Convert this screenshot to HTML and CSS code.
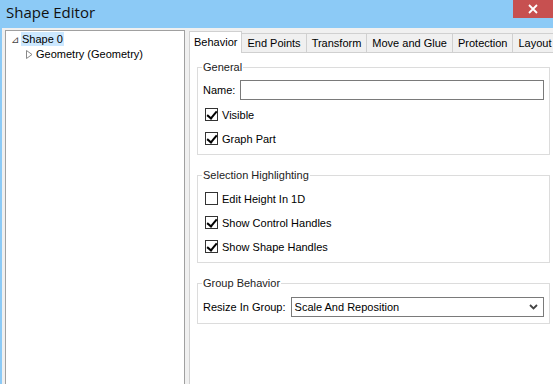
FILE: index.html
```html
<!DOCTYPE html>
<html>
<head>
<meta charset="utf-8">
<link rel="stylesheet" href="styles.css">
</head>
<body>
<div class="titlebar">
  <span class="title">Shape Editor</span>
  <div class="close"><svg width="10" height="10" viewBox="0 0 10 10"><path d="M1 1 L9 9 M9 1 L1 9" stroke="#fff" stroke-width="1.8"/></svg></div>
</div>
<div class="window">
  <div class="tree">
    <div class="node"><span class="exp">⊿</span><span class="sel">Shape 0</span></div>
    <div class="node child"><svg class="arrow" width="7" height="9" viewBox="0 0 7 9"><path d="M0.5 0.5 L6 4.5 L0.5 8.5 Z" fill="none" stroke="#888" stroke-width="1"/></svg><span>Geometry (Geometry)</span></div>
  </div>
  <div class="tabs">
    <div class="tabstrip">
      <div class="tab active">Behavior</div>
      <div class="tab">End Points</div>
      <div class="tab">Transform</div>
      <div class="tab">Move and Glue</div>
      <div class="tab">Protection</div>
      <div class="tab">Layout</div>
    </div>
    <div class="pane">
      <fieldset class="group g1">
        <legend>General</legend>
        <div class="row name"><span>Name:</span><div class="input"></div></div>
        <div class="row chk"><span class="box on"></span>Visible</div>
        <div class="row chk"><span class="box on"></span>Graph Part</div>
      </fieldset>
      <fieldset class="group g2">
        <legend>Selection Highlighting</legend>
        <div class="row chk"><span class="box"></span>Edit Height In 1D</div>
        <div class="row chk"><span class="box on"></span>Show Control Handles</div>
        <div class="row chk"><span class="box on"></span>Show Shape Handles</div>
      </fieldset>
      <fieldset class="group g3">
        <legend>Group Behavior</legend>
        <div class="row name"><span>Resize In Group:</span><div class="input select">Scale And Reposition<svg class="chev" width="9" height="6" viewBox="0 0 9 6"><path d="M1 1 L4.5 4.5 L8 1" fill="none" stroke="#444" stroke-width="1.8"/></svg></div></div>
      </fieldset>
    </div>
  </div>
</div>
</body>
</html>
```
FILE: styles.css
```css
html, body { margin: 0; padding: 0; }
body {
  width: 553px; height: 384px; overflow: hidden;
  background: #8ccaf6;
  font-family: "Liberation Sans", Arial, sans-serif;
  font-size: 11px; color: #000;
}
.titlebar {
  height: 28px; display: flex; align-items: flex-start; justify-content: space-between;
}
.title {
  font-family: "Open Sans", "Noto Sans", sans-serif; font-size: 15px; color: #111;
  padding-left: 6px; line-height: 25px;
}
.close {
  width: 40px; height: 18px; background: #c75050;
  display: flex; align-items: center; justify-content: center;
}
.window {
  margin-left: 2px; background: #f0f0f0; height: 356px;
  display: flex; padding: 2px 0 0 3px; box-sizing: border-box; gap: 4px;
}
.tree {
  width: 180px; box-sizing: border-box; border: 1px solid #a0a0a0; border-bottom: none;
  background: #fff; padding-top: 1px;
}
.node { height: 14px; display: flex; align-items: center; }
.exp { width: 13px; text-align: right; margin-right: 2px; color: #444; font-size: 10px; }
.sel { background: #cce8ff; padding: 0 1px; line-height: 14px; }
.node.child { margin-top: 1px; padding-left: 20px; }
.arrow { margin-right: 3px; }
.tabs { flex: 1; display: flex; flex-direction: column; min-width: 0; }
.tabstrip { display: flex; height: 22px; align-items: flex-end; }
.tab {
  height: 19px; box-sizing: border-box; padding: 0 5px; line-height: 18px;
  background: #f0f0f0; border: 1px solid #d0d0d0; border-bottom: none;
  margin-left: -1px; white-space: nowrap; position: relative;
}
.tab.active {
  height: 22px; background: #fff; border-color: #d0d0d0; margin-left: 0;
  line-height: 21px; z-index: 1; margin-bottom: -1px; padding: 0 4px;
}
.pane {
  flex: 1; background: #fff; border: 1px solid #d0d0d0; border-right: none; border-bottom: none;
  padding: 8px 3px 0 7px;
}
.group {
  margin: 0 0 14px 0; border: 1px solid #dcdcdc; padding: 0 5px 0 5px;
}
.group legend { padding: 0 1px; margin-left: -1px; line-height: 13px; color: #222; }
.row { display: flex; align-items: center; }
.name span { margin-right: 5px; }
.input {
  flex: 1; height: 20px; box-sizing: border-box; border: 1px solid #7a7a7a; background: #fff;
}
.name { height: 20px; }
.chk { height: 13px; margin-bottom: 11px; padding-left: 2px; }
.box {
  width: 13px; height: 13px; box-sizing: border-box; border: 1px solid #333; background: #fff;
  margin-right: 4px; position: relative;
}
.box.on::after {
  content: ""; position: absolute; left: 3px; top: 0px; width: 4px; height: 8px;
  border: solid #000; border-width: 0 2px 2px 0; transform: rotate(40deg);
}
.g1 .name { margin-top: 6px; margin-bottom: 8px; }
.g1 .chk:last-child { margin-bottom: 9px; }
.g2 .chk:first-of-type { margin-top: 10px; }
.g2 .chk:last-child { margin-bottom: 9px; }
.g3 .name { margin-top: 7px; margin-bottom: 6px; }
.select {
  display: flex; align-items: center; padding-left: 3px; justify-content: space-between; padding-right: 5px;
}
```
